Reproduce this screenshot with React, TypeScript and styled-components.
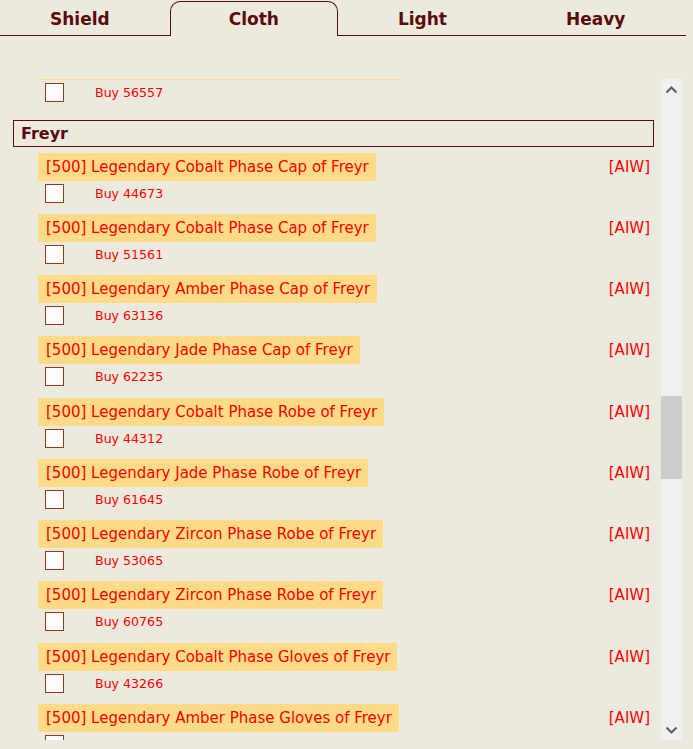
import * as React from "react";
import styled, { createGlobalStyle } from "styled-components";

// Colours picked from the reference.
const BG = "#ece9de";
const MAROON = "#5c0b0b";
const HIGHLIGHT = "#ffdb88";
const RED = "#ff0000";

const GlobalStyle = createGlobalStyle`
  html, body {
    margin: 0;
    padding: 0;
    background: ${BG};
  }
  body {
    font-family: "DejaVu Sans", Verdana, sans-serif;
    overflow: hidden;
  }
`;

const Page = styled.div`
  width: 693px;
  height: 749px;
  background: ${BG};
`;

const TabBar = styled.div`
  width: 686px;
  height: 36px;
  box-sizing: border-box;
  border-bottom: 1px solid ${MAROON};
  display: flex;
  align-items: flex-end;
  gap: 1px;
`;

const Tab = styled.div<{ $active?: boolean }>`
  height: 35px;
  box-sizing: border-box;
  padding: 0 58px 1px;
  margin-bottom: -1px;
  display: flex;
  align-items: center;
  justify-content: center;
  font-size: 17px;
  font-weight: bold;
  color: ${MAROON};
  background: ${(p) => (p.$active ? BG : "transparent")};
  border: 1px solid ${(p) => (p.$active ? MAROON : "transparent")};
  border-bottom: none;
  border-radius: 10px 10px 0 0;
  white-space: nowrap;
  cursor: pointer;

  &:first-child {
    margin-left: -9px;
  }
`;

const ScrollFrame = styled.div`
  margin: 43px 0 0 8px;
  width: 674px;
  height: 661px;
  display: flex;
`;

const Viewport = styled.div`
  flex: 1;
  min-width: 0;
  overflow: hidden;
`;

const ScrollBar = styled.div`
  width: 21px;
  flex: none;
  display: flex;
  flex-direction: column;
  background: #f0f0f0;
`;

const ScrollButton = styled.div`
  height: 21px;
  flex: none;
  display: flex;
  align-items: center;
  justify-content: center;
`;

const Track = styled.div`
  flex: 1;
  position: relative;
`;

const Thumb = styled.div`
  position: absolute;
  left: 0;
  right: 0;
  background: #cdcdcd;
`;

const GroupHeader = styled.div`
  margin: 6px 7px 6px 5px;
  height: 27px;
  box-sizing: border-box;
  border: 1px solid ${MAROON};
  padding: 1px 0 0 7px;
  display: flex;
  align-items: center;
  font-size: 16px;
  font-weight: bold;
  color: ${MAROON};
`;

const Item = styled.div`
  padding: 0 11px 0 30px;
`;

const TitleRow = styled.div`
  height: 28px;
  display: flex;
  align-items: center;
  justify-content: space-between;
  font-size: 15px;
  color: ${RED};
`;

const ItemName = styled.span`
  background: ${HIGHLIGHT};
  line-height: 28px;
  padding: 0 7px 0 8px;
  white-space: nowrap;
`;

const Source = styled.span`
  white-space: nowrap;
`;

const BuyRow = styled.label`
  height: 33.25px;
  box-sizing: border-box;
  padding: 3px 0 0 7px;
  display: flex;
  align-items: flex-start;
  gap: 31px;
  font-size: 12.6px;
  color: ${RED};
`;

const Check = styled.input`
  appearance: none;
  margin: 0;
  width: 19px;
  height: 19px;
  box-sizing: border-box;
  border: 1px solid #9c3a0a;
  background: #fff;
  flex: none;
`;

const BuyText = styled.span`
  line-height: 19px;
`;

interface IItem {
  name: string;
  buy: number;
}

interface IGroup {
  god: string;
  items: IItem[];
}

const colours = ["Cobalt", "Amber", "Jade", "Zircon"];
const pieces = ["Cap", "Robe", "Gloves", "Boots", "Belt", "Cloak"];

const makeItems = (god: string, count: number, seed: number): IItem[] =>
  Array.from({ length: count }, (_, i) => ({
    name: `[500] Legendary ${colours[(i + seed) % 4]} Phase ${pieces[Math.floor(i / 2) % 6]} of ${god}`,
    buy: 40000 + ((i * 7919 + seed * 3571) % 25000),
  }));

const freyr: IItem[] = [
  { name: "[500] Legendary Cobalt Phase Cap of Freyr", buy: 44673 },
  { name: "[500] Legendary Cobalt Phase Cap of Freyr", buy: 51561 },
  { name: "[500] Legendary Amber Phase Cap of Freyr", buy: 63136 },
  { name: "[500] Legendary Jade Phase Cap of Freyr", buy: 62235 },
  { name: "[500] Legendary Cobalt Phase Robe of Freyr", buy: 44312 },
  { name: "[500] Legendary Jade Phase Robe of Freyr", buy: 61645 },
  { name: "[500] Legendary Zircon Phase Robe of Freyr", buy: 53065 },
  { name: "[500] Legendary Zircon Phase Robe of Freyr", buy: 60765 },
  { name: "[500] Legendary Cobalt Phase Gloves of Freyr", buy: 43266 },
  { name: "[500] Legendary Amber Phase Gloves of Freyr", buy: 58214 },
  { name: "[500] Legendary Jade Phase Gloves of Freyr", buy: 47702 },
  { name: "[500] Legendary Zircon Phase Gloves of Freyr", buy: 52930 },
  { name: "[500] Legendary Cobalt Phase Boots of Freyr", buy: 45518 },
  { name: "[500] Legendary Amber Phase Boots of Freyr", buy: 61077 },
  { name: "[500] Legendary Jade Phase Boots of Freyr", buy: 49381 },
  { name: "[500] Legendary Zircon Phase Boots of Freyr", buy: 56240 },
];

const forseti = makeItems("Forseti", 13, 3);
forseti[12] = { name: "[500] Legendary Zircon Phase Cloak of Forseti", buy: 56557 };

const groups: IGroup[] = [
  { god: "Baldur", items: makeItems("Baldur", 12, 1) },
  { god: "Bragi", items: makeItems("Bragi", 13, 2) },
  { god: "Forseti", items: forseti },
  { god: "Freyr", items: freyr },
  { god: "Heimdall", items: makeItems("Heimdall", 12, 5) },
  { god: "Hodur", items: makeItems("Hodur", 12, 6) },
];

const tabs = ["Shield", "Cloth", "Light", "Heavy"];

const Chevron: React.FC<{ up?: boolean }> = ({ up }) => (
  <svg width="21" height="21" viewBox="0 0 21 21">
    <path
      d={up ? "M5.5 13.5L10.5 8.5L15.5 13.5" : "M5.5 8.5L10.5 13.5L15.5 8.5"}
      fill="none"
      stroke="#606060"
      strokeWidth="2.2"
    />
  </svg>
);

const BUTTON = 21;

export default function App() {
  const viewRef = React.useRef<HTMLDivElement>(null);
  const anchorRef = React.useRef<HTMLDivElement>(null);
  const [thumb, setThumb] = React.useState({ top: 0, height: 0 });

  // Scroll so the Freyr group sits near the top, as in the captured state,
  // then size the scrollbar thumb from the list's real metrics.
  React.useLayoutEffect(() => {
    const view = viewRef.current;
    const anchor = anchorRef.current;
    if (!view || !anchor) return;
    view.scrollTop = anchor.offsetTop - view.offsetTop - 41;
    const track = view.clientHeight - BUTTON * 2;
    const height = Math.max(20, (view.clientHeight / view.scrollHeight) * track);
    const maxScroll = view.scrollHeight - view.clientHeight;
    const top = maxScroll > 0 ? (view.scrollTop / maxScroll) * (track - height) : 0;
    setThumb({ top: top - 2, height: height + 2 });
  }, []);

  return (
    <Page>
      <GlobalStyle />
      <TabBar>
        {tabs.map((t) => (
          <Tab key={t} $active={t === "Cloth"}>{t}</Tab>
        ))}
      </TabBar>
      <ScrollFrame>
        <Viewport ref={viewRef}>
          {groups.map((g) => (
            <div key={g.god}>
              <GroupHeader ref={g.god === "Freyr" ? anchorRef : undefined}>{g.god}</GroupHeader>
              {g.items.map((it, i) => (
                <Item key={i}>
                  <TitleRow>
                    <ItemName>{it.name}</ItemName>
                    <Source>[AIW]</Source>
                  </TitleRow>
                  <BuyRow>
                    <Check type="checkbox" />
                    <BuyText>Buy {it.buy}</BuyText>
                  </BuyRow>
                </Item>
              ))}
            </div>
          ))}
        </Viewport>
        <ScrollBar>
          <ScrollButton><Chevron up /></ScrollButton>
          <Track>
            <Thumb style={{ top: thumb.top, height: thumb.height }} />
          </Track>
          <ScrollButton><Chevron /></ScrollButton>
        </ScrollBar>
      </ScrollFrame>
    </Page>
  );
}
